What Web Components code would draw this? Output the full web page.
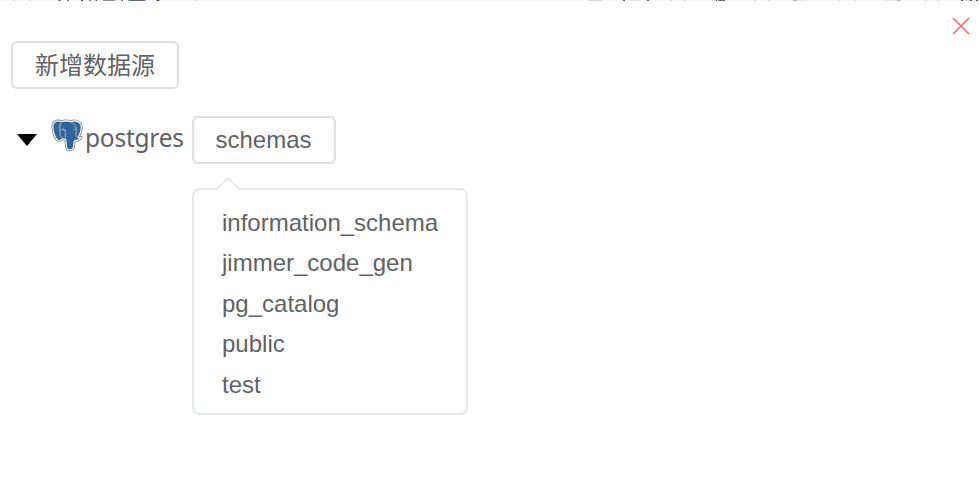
<!DOCTYPE html>
<html lang="zh-CN">
<head>
<meta charset="utf-8">
<title>数据源</title>
<style>
html,body{margin:0;height:100%;overflow:hidden;background:#fff}
body{font-family:"Liberation Sans","Noto Sans CJK SC",sans-serif;font-size:24px;color:#606266}
.add{--text-top:1px;--text-left:22px}
</style>
</head>
<body>
<source-dialog>
  <ui-button class="add">新增数据源</ui-button>
  <source-row slot="row" name="postgres">
    <ui-button slot="action">schemas</ui-button>
    <schema-popover slot="popover">
      <schema-item>information_schema</schema-item>
      <schema-item>jimmer_code_gen</schema-item>
      <schema-item>pg_catalog</schema-item>
      <schema-item>public</schema-item>
      <schema-item>test</schema-item>
    </schema-popover>
  </source-row>
</source-dialog>
<script>
const define = (tag, html) => customElements.define(tag, class extends HTMLElement {
  constructor() {
    super();
    this.attachShadow({ mode: 'open' }).innerHTML = html;
  }
  connectedCallback() {
    const label = this.shadowRoot.querySelector('.name');
    if (label) label.textContent = this.getAttribute('name');
  }
});

define('ui-button', `
<style>
:host{display:inline-flex;flex:none}
button{box-sizing:border-box;height:48px;padding:var(--text-top,0) 22px 0 var(--text-left,21.5px);border:2px solid #dcdfe6;border-radius:6px;background:#fff;color:inherit;font:inherit;line-height:44px;white-space:nowrap;text-align:left;flex:1}
</style><button><slot></slot></button>`);

const elephant = 'M10.500 2.600C6 .9 1.800 2.600 1.800 8C1.800 13 4.500 20.500 7.300 21.800C8.900 22.500 10 21 11.500 19.800L14.600 20.600C15.400 22.500 15 27.500 16 29.600C17 31.600 21.300 31 22.300 28.600C23.100 26.500 22.800 23.700 23.400 21.800C25.600 22 28.500 20.600 30.200 18.400C28.500 19 27.600 18.600 27 18C29.500 15 31.300 8 29.500 5C27.200 1.500 22.800 1.600 20 2.600C17 1.800 13.500 1.500 10.500 2.600Z';
define('postgres-icon', `
<style>:host{display:block;width:32px;height:33px}svg{display:block}</style>
<svg width="32" height="33" viewBox="0 0 32 33" stroke-linejoin="round" stroke-linecap="round">
  <path fill="none" stroke="#85878a" stroke-width="2.800" d="${elephant}"/>
  <path fill="#31659a" stroke="#fff" stroke-width="1.100" d="${elephant}"/>
  <g fill="none" stroke="#b9cadb" stroke-width=".8">
    <path d="M10.500 2.800C8 6 9 10 9 13.500C8.700 16 9.800 18 11.500 19.200M9.300 11C11 9.800 13.500 9.800 14.300 11.300C15 14 13.500 16.500 14.500 20M20 2.800C23.500 5 25.500 8 25.200 11.500C25.300 15 24 17 26 18.500"/>
    <path d="M12.700 11L13.800 11.200M23 10.500L24.500 10.400"/>
  </g>
</svg>`);

define('source-row', `
<style>
:host{display:grid;grid-template-columns:181px 144px;justify-content:start}
.lead{display:flex;height:48px}
.caret{width:20px;height:12px;margin:18px 0 0 6px}
postgres-icon{margin:3px 2px 0 14px}
.name{font:24.5px/44px "Noto Sans","Open Sans",sans-serif;white-space:nowrap;letter-spacing:-.25px}
.pop{grid-column:1 / -1;padding-left:181px}
</style>
<div class="lead"><svg class="caret" viewBox="0 0 20 12"><path d="M0 0H20L10 12Z"/></svg><postgres-icon></postgres-icon><span class="name"></span></div>
<slot name="action"></slot>
<div class="pop"><slot name="popover"></slot></div>`);

define('schema-item', `
<style>:host{display:block;height:40.4px;line-height:40.4px;white-space:nowrap}</style><slot></slot>`);

define('schema-popover', `
<style>
:host{display:block;position:relative;box-sizing:border-box;width:276px;height:227px;margin-top:24px;padding:13px 28px 0;border:2px solid #e4e7ed;border-radius:8px;background:#fff}
.arrow{position:absolute;left:21px;top:-13px;width:26px;height:14px}
</style>
<svg class="arrow" viewBox="0 0 26 14"><path fill="#fff" d="M1 14V12L13 1L25 12V14Z"/><path fill="none" stroke="#e4e7ed" stroke-width="2" d="M1 12.500L11.600 2.200Q13 .9 14.400 2.200L25 12.500"/></svg>
<slot></slot>`);

/* One-pixel sliver of the page that stays visible above the dialog: [x, width, colour]. */
const marks = [[13,2,'#d5d5d5'],[29,2,'#d5d5d5'],[58,1,'#d3a273'],[59,1,'#4a4a55'],[60,1,'#80b0dd'],
[67,1,'#d3a273'],[68,1,'#44485c'],[81,2,'#5d5363'],[89,1,'#d3a273'],[90,1,'#4b5064'],[95,1,'#d3a273'],[96,1,'#44485c'],
[103,12,'#929292'],[115,3,'#e4e4e0'],[121,1,'#83b8e4'],[122,1,'#454545'],[128,1,'#83b8e4'],[129,16,'#6a6a6a'],[145,1,'#d8b283'],
[156,1,'#83a8cb'],[157,2,'#4c4c50'],[159,1,'#d8a97b'],[195,2,'#d5d5d5'],
[588,14,'#d5d5d5'],[623,2,'#555'],[630,9,'#e2e2e2'],[647,2,'#555'],[670,2,'#d5d5d5'],[684,2,'#d5d5d5'],
[716,1,'#555'],[718,1,'#999'],[719,3,'#5b5b5b'],[722,1,'#999'],[723,2,'#555'],[754,2,'#d8d8d8'],[768,2,'#d8d8d8'],
[793,4,'#b1b1b8'],[797,9,'#e8e8e8'],[838,2,'#dedede'],[854,2,'#dedede'],[883,14,'#e8e8e8'],[897,3,'#aeb0bb'],[900,1,'#ddd'],
[924,2,'#dedede'],[938,2,'#dedede'],[961,2,'#555'],[963,7,'#ddd'],[970,2,'#555'],[976,2,'#555']];
define('page-sliver', `
<style>:host{display:block;height:1px;background:#f8f8f8}svg{display:block}</style>
<svg width="979" height="1" shape-rendering="crispEdges">${marks.map(([x, w, c]) => `<rect x="${x}" width="${w}" height="1" fill="${c}"/>`).join('')}</svg>`);

define('source-dialog', `
<style>
:host{display:block}
.panel{position:relative;display:flex;flex-direction:column;align-items:flex-start;gap:27px;padding:40px 11px 0}
.close{position:absolute;right:9px;top:16px;width:18px;height:18px}
</style>
<page-sliver></page-sliver>
<div class="panel">
  <svg class="close" viewBox="0 0 18 18"><path d="M1 1L17 17M17 1L1 17" stroke="#f56c6c" stroke-width="1.700" fill="none"/></svg>
  <slot></slot>
  <slot name="row"></slot>
</div>`);
</script>
</body>
</html>
